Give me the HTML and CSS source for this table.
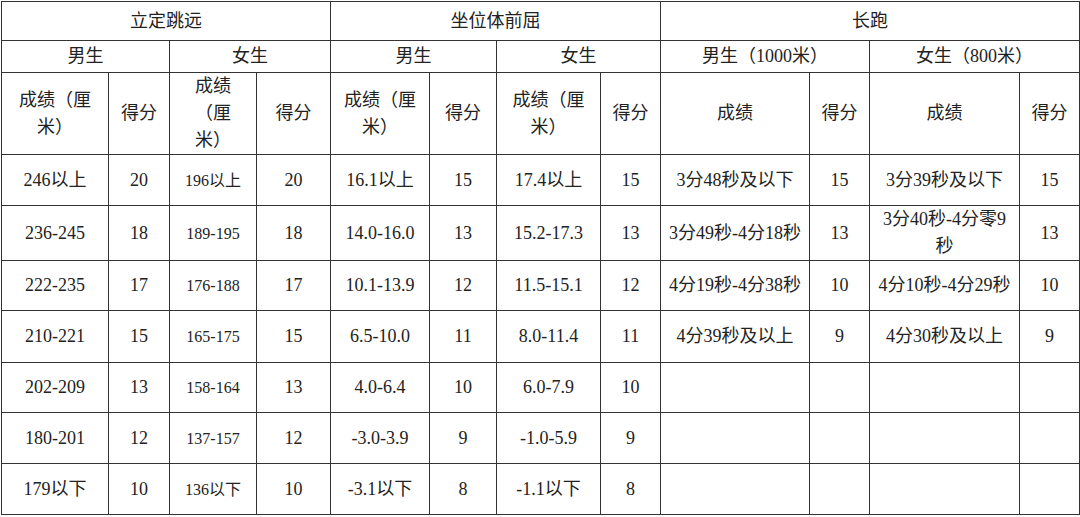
FILE: index.html
```html
<!DOCTYPE html>
<html lang="zh-CN">
<head>
<meta charset="utf-8">
<title>体育成绩评分标准</title>
<link rel="stylesheet" href="styles.css">
</head>
<body>
<table class="score-table">
  <colgroup>
    <col class="c-a"><col class="c-b"><col class="c-c"><col class="c-d">
    <col class="c-e"><col class="c-f"><col class="c-g"><col class="c-h">
    <col class="c-i"><col class="c-j"><col class="c-k"><col class="c-l">
  </colgroup>
  <tr class="row-title">
    <td colspan="4">立定跳远</td>
    <td colspan="4">坐位体前屈</td>
    <td colspan="4">长跑</td>
  </tr>
  <tr class="row-sub">
    <td colspan="2">男生</td>
    <td colspan="2">女生</td>
    <td colspan="2">男生</td>
    <td colspan="2">女生</td>
    <td colspan="2">男生（1000米）</td>
    <td colspan="2">女生（800米）</td>
  </tr>
  <tr class="row-head">
    <td>成绩（厘<br>米）</td>
    <td>得分</td>
    <td>成绩<br>（厘<br>米）</td>
    <td>得分</td>
    <td>成绩（厘<br>米）</td>
    <td>得分</td>
    <td>成绩（厘<br>米）</td>
    <td>得分</td>
    <td>成绩</td>
    <td>得分</td>
    <td>成绩</td>
    <td>得分</td>
  </tr>
  <tr class="row-1">
    <td>246以上</td><td>20</td><td class="small">196以上</td><td>20</td>
    <td>16.1以上</td><td>15</td><td>17.4以上</td><td>15</td>
    <td>3分48秒及以下</td><td>15</td><td>3分39秒及以下</td><td>15</td>
  </tr>
  <tr class="row-2">
    <td>236-245</td><td>18</td><td class="small">189-195</td><td>18</td>
    <td>14.0-16.0</td><td>13</td><td>15.2-17.3</td><td>13</td>
    <td>3分49秒-4分18秒</td><td>13</td><td>3分40秒-4分零9<br>秒</td><td>13</td>
  </tr>
  <tr class="row-3">
    <td>222-235</td><td>17</td><td class="small">176-188</td><td>17</td>
    <td>10.1-13.9</td><td>12</td><td>11.5-15.1</td><td>12</td>
    <td>4分19秒-4分38秒</td><td>10</td><td>4分10秒-4分29秒</td><td>10</td>
  </tr>
  <tr class="row-4">
    <td>210-221</td><td>15</td><td class="small">165-175</td><td>15</td>
    <td>6.5-10.0</td><td>11</td><td>8.0-11.4</td><td>11</td>
    <td>4分39秒及以上</td><td>9</td><td>4分30秒及以上</td><td>9</td>
  </tr>
  <tr class="row-5">
    <td>202-209</td><td>13</td><td class="small">158-164</td><td>13</td>
    <td>4.0-6.4</td><td>10</td><td>6.0-7.9</td><td>10</td>
    <td></td><td></td><td></td><td></td>
  </tr>
  <tr class="row-6">
    <td>180-201</td><td>12</td><td class="small">137-157</td><td>12</td>
    <td>-3.0-3.9</td><td>9</td><td>-1.0-5.9</td><td>9</td>
    <td></td><td></td><td></td><td></td>
  </tr>
  <tr class="row-7">
    <td>179以下</td><td>10</td><td class="small">136以下</td><td>10</td>
    <td>-3.1以下</td><td>8</td><td>-1.1以下</td><td>8</td>
    <td></td><td></td><td></td><td></td>
  </tr>
</table>
</body>
</html>
```

FILE: styles.css
```css
html, body {
  margin: 0;
  background: #ffffff;
}

body {
  padding: 1px 0 0 1px;
}

.score-table {
  border-collapse: collapse;
  table-layout: fixed;
  width: 1079px;
  font-family: "Liberation Serif", "Noto Sans CJK SC", serif;
  font-size: 18px;
  line-height: 27px;
  color: #222222;
}

.score-table td {
  border: 1px solid #333333;
  text-align: center;
  vertical-align: middle;
  padding: 0 6px;
}

.score-table td.small {
  font-size: 16px;
}

.c-a { width: 107px; }
.c-b { width: 61px; }
.c-c { width: 87px; }
.c-d { width: 74px; }
.c-e { width: 99px; }
.c-f { width: 67px; }
.c-g { width: 104px; }
.c-h { width: 60px; }
.c-i { width: 149px; }
.c-j { width: 60px; }
.c-k { width: 150px; }
.c-l { width: 60px; }

.row-title { height: 39px; }
.row-sub { height: 32px; }
.row-head { height: 80px; }
.row-1 { height: 51px; }
.row-2 { height: 55px; }
.row-3 { height: 50px; }
.row-4 { height: 52px; }
.row-5 { height: 50px; }
.row-6 { height: 51px; }
.row-7 { height: 51px; }
```
